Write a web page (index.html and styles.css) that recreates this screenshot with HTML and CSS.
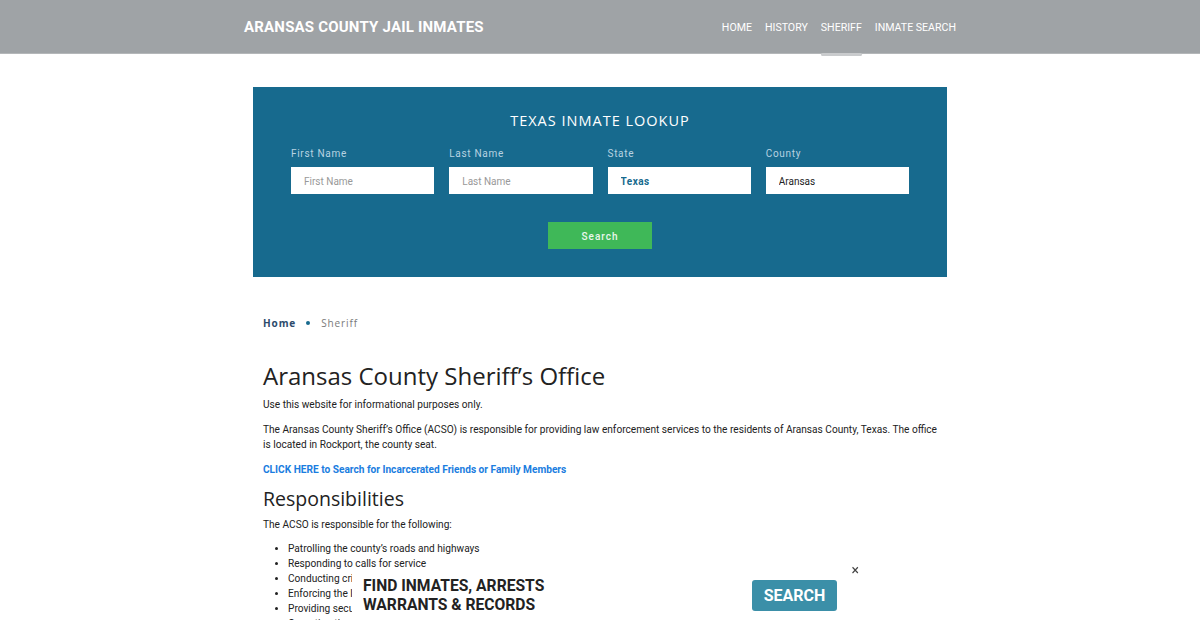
FILE: index.html
```html
<!DOCTYPE html>
<html>
<head>
  <meta charset="utf-8">
  <link rel="stylesheet" href="styles.css">
</head>
<body>
  <header class="topbar">
    <div class="topbar-inner">
      <a class="brand" href="#">ARANSAS COUNTY JAIL INMATES</a>
      <nav class="nav">
        <a href="#">HOME</a>
        <a href="#">HISTORY</a>
        <a href="#" class="active">SHERIFF</a>
        <a href="#">INMATE SEARCH</a>
      </nav>
    </div>
  </header>

  <main class="container">
    <section class="lookup">
      <h2 class="lookup-title">TEXAS INMATE LOOKUP</h2>
      <div class="lookup-fields">
        <div class="field">
          <label>First Name</label>
          <input type="text" placeholder="First Name">
        </div>
        <div class="field">
          <label>Last Name</label>
          <input type="text" placeholder="Last Name">
        </div>
        <div class="field">
          <label>State</label>
          <input type="text" class="state" value="Texas">
        </div>
        <div class="field">
          <label>County</label>
          <input type="text" value="Aransas">
        </div>
      </div>
      <button class="search-btn">Search</button>
    </section>

    <div class="breadcrumb">
      <a href="#">Home</a>
      <span class="dot"></span>
      <span class="current">Sheriff</span>
    </div>

    <article class="content">
      <h1>Aransas County Sheriff’s Office</h1>
      <p>Use this website for informational purposes only.</p>
      <p>The Aransas County Sheriff’s Office (ACSO) is responsible for providing law enforcement services to the residents of Aransas County, Texas. The office is located in Rockport, the county seat.</p>
      <p><a class="cta" href="#">CLICK HERE to Search for Incarcerated Friends or Family Members</a></p>
      <h2>Responsibilities</h2>
      <p>The ACSO is responsible for the following:</p>
      <ul>
        <li>Patrolling the county’s roads and highways</li>
        <li>Responding to calls for service</li>
        <li>Conducting criminal investigations</li>
        <li>Enforcing the laws of the state</li>
        <li>Providing security for the county courts</li>
        <li>Operating the county jail</li>
      </ul>
    </article>
  </main>

  <div class="ad">
    <div class="ad-text">FIND INMATES, ARRESTS<br>WARRANTS &amp; RECORDS</div>
    <button class="ad-btn">SEARCH</button>
    <span class="ad-close">×</span>
  </div>
</body>
</html>
```

FILE: styles.css
```css
body {
  margin: 0;
  font-family: Roboto, "Liberation Sans", sans-serif;
  color: #222;
  background: #fff;
}

a {
  text-decoration: none;
}

.topbar {
  background-color: #9fa3a6;
  height: 53px;
  border-bottom: 1px solid #b4b7b9;
}

.topbar-inner {
  width: 712px;
  margin: 0 auto;
  display: flex;
  justify-content: space-between;
  align-items: center;
  height: 53px;
}

.brand {
  color: #fff;
  font-size: 15px;
  font-weight: bold;
  letter-spacing: 0.2px;
  padding-top: 1px;
}

.nav {
  display: flex;
  gap: 13px;
  height: 53px;
}

.nav a {
  color: #fff;
  font-size: 10.6px;
  font-weight: normal;
  line-height: 55px;
  position: relative;
}

.nav a.active:after {
  content: "";
  position: absolute;
  left: 0;
  right: 0;
  bottom: -3px;
  height: 3px;
  background-color: #c9cbcd;
  border-radius: 2px;
}

.container {
  width: 694px;
  margin: 33px auto 0;
}

.lookup {
  background-color: #176a8e;
  height: 190px;
  box-sizing: border-box;
  padding-top: 24px;
  text-align: center;
}

.lookup-title {
  margin: 0;
  color: #fff;
  font-family: "Open Sans", sans-serif;
  font-weight: normal;
  font-size: 14.5px;
  letter-spacing: 1px;
  line-height: 20px;
}

.lookup-fields {
  display: flex;
  gap: 15px;
  padding: 17px 38px 0;
  text-align: left;
}

.field {
  flex: 1;
}

.field label {
  display: block;
  color: #b8d3e1;
  font-size: 10px;
  letter-spacing: 0.7px;
  margin-bottom: 7px;
  line-height: 12px;
}

.field input {
  width: 100%;
  height: 27px;
  box-sizing: border-box;
  border: none;
  padding: 2px 13px 0;
  font-family: Roboto, sans-serif;
  font-size: 10px;
  color: #222;
}

.field input::placeholder {
  color: #999;
}

.field input.state {
  color: #176a8e;
  font-weight: bold;
  letter-spacing: 0.5px;
}

.search-btn {
  margin-top: 28px;
  width: 104px;
  height: 27px;
  border: none;
  padding-top: 2px;
  background-color: #3fb858;
  color: #e9f6ec;
  font-family: Roboto, sans-serif;
  font-size: 10px;
  font-weight: 500;
  letter-spacing: 1px;
}

.breadcrumb {
  display: flex;
  align-items: center;
  padding: 39px 10px 0;
  font-family: "Open Sans", sans-serif;
  font-size: 10px;
  letter-spacing: 0.9px;
}

.breadcrumb a {
  color: #2c4a6b;
  font-weight: bold;
}

.breadcrumb .dot {
  width: 4px;
  height: 4px;
  border-radius: 50%;
  background-color: #176a8e;
  margin: 0 11px 0 10px;
}

.breadcrumb .current {
  color: #7a7a7a;
}

.content {
  padding: 31px 10px 0;
  font-size: 10.15px;
  line-height: 15px;
}

.content h1 {
  font-family: "Open Sans", sans-serif;
  font-weight: normal;
  font-size: 24px;
  line-height: 30px;
  margin: 0 0 6px;
  color: #222;
}

.content h2 {
  font-family: "Open Sans", sans-serif;
  font-weight: normal;
  font-size: 19.5px;
  line-height: 24px;
  margin: 8px 0 6px;
  color: #222;
}

.content p {
  margin: 0 0 10px;
}

.cta {
  color: #1a7de0;
  font-weight: bold;
}

.content ul {
  margin: -1px 0 0;
  padding-left: 25px;
}

.ad {
  position: fixed;
  left: 352px;
  bottom: 0;
  width: 518px;
  height: 52px;
  background: #fff;
  display: flex;
  align-items: flex-start;
  padding-top: 8px;
  box-sizing: border-box;
}

.ad-text {
  margin-left: 11px;
  font-family: Roboto, sans-serif;
  font-weight: bold;
  font-size: 17px;
  line-height: 19px;
  color: #222;
  transform: scaleX(0.92);
  transform-origin: left;
}

.ad-btn {
  margin-left: auto;
  margin-right: 33px;
  margin-top: 4px;
  width: 85px;
  height: 31px;
  border: none;
  border-radius: 3px;
  background-color: #3b8fa8;
  color: #fff;
  font-family: Roboto, sans-serif;
  font-weight: bold;
  font-size: 16px;
}

.ad-close {
  position: absolute;
  right: 11px;
  top: -6px;
  font-size: 14px;
  color: #444;
}
```
